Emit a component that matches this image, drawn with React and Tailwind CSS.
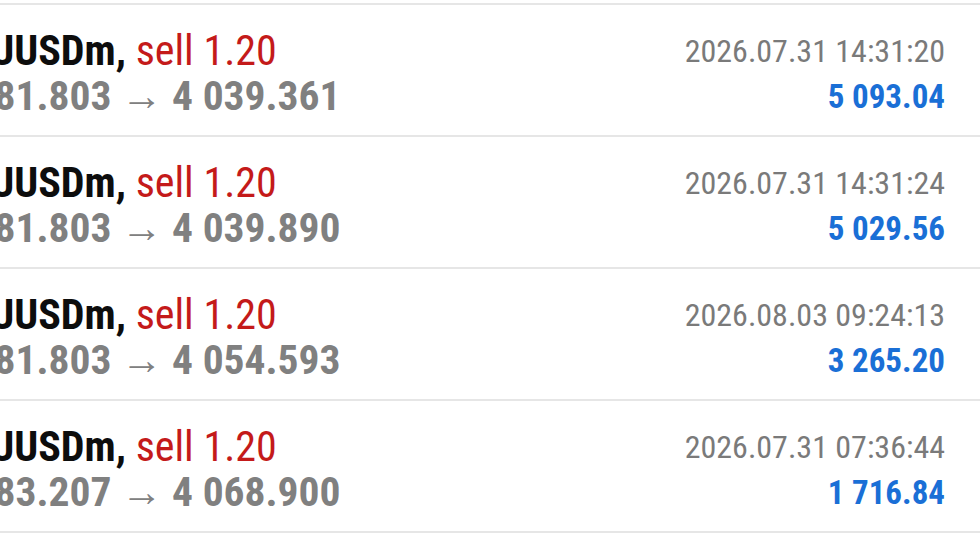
import React from "react";

const rows = [
  { open: "4 081.803", close: "4 039.361", date: "2026.07.31 14:31:20", profit: "5 093.04" },
  { open: "4 081.803", close: "4 039.890", date: "2026.07.31 14:31:24", profit: "5 029.56" },
  { open: "4 081.803", close: "4 054.593", date: "2026.08.03 09:24:13", profit: "3 265.20" },
  { open: "4 083.207", close: "4 068.900", date: "2026.07.31 07:36:44", profit: "1 716.84" },
];

export default function App() {
  return (
    <div
      className="w-[980px] h-[552px] bg-white overflow-hidden pt-[3px]"
      style={{ fontFamily: '"Roboto Condensed", Roboto, sans-serif' }}
    >
      {rows.map((r, i) => (
        <div
          key={i}
          className="h-[132px] border-t-[2px] border-[#e6e6e6] flex justify-between overflow-hidden"
        >
          <div className="pt-[23px] -ml-[58px] whitespace-nowrap">
            <div className="text-[42px] leading-[45px]">
              <span className="font-bold text-[#0d0d0d]">XAUUSDm,</span>{" "}
              <span className="text-[#c41a1a]">sell 1.20</span>
            </div>
            <div className="text-[41.5px] leading-[45px] font-bold text-[#808080] pl-[1px]">
              {r.open} <span className="font-normal">→</span> {r.close}
            </div>
          </div>
          <div className="pt-[26px] pr-[35px] text-right whitespace-nowrap">
            <div className="text-[32px] leading-[40px] text-[#7a7a7a]">{r.date}</div>
            <div className="mt-[2px] text-[33px] leading-[48px] font-bold text-[#1a6fd6]">{r.profit}</div>
          </div>
        </div>
      ))}
      <div className="border-t-[2px] border-[#e6e6e6]" />
    </div>
  );
}
